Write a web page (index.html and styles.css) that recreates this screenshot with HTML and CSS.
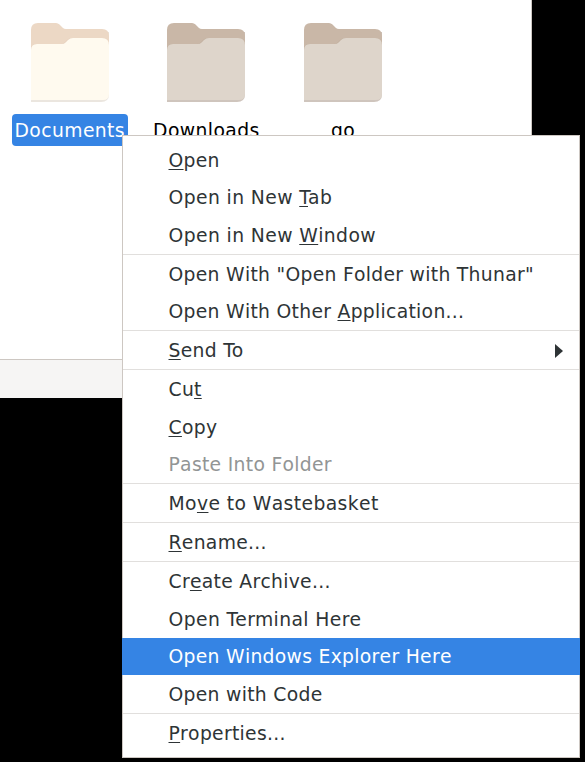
FILE: index.html
```html
<!DOCTYPE html>
<html lang="en">
<head>
<meta charset="utf-8">
<title>File manager</title>
<link rel="stylesheet" href="styles.css">
</head>
<body>
<svg class="defs" aria-hidden="true">
  <symbol id="folder" viewBox="0 0 82 82">
    <path class="shade" d="M2 10h78v62q0 8-8 8H2z"/>
    <path class="back" d="M2 8q0-7 7-7h18q2 0 3.500 1.500L34 6q1 1 3 1h36q7 0 7 7v30H2z"/>
    <path class="fold" d="M2 27q0-5 6-5h24q2 0 3.500-1.500L38 18q2-2 5-2h31q6 0 6 6v8H2z"/>
    <path class="front" d="M2 28q0-6 6-6h25q2 0 3.500-1.500L39 18q2-2 5-2h29q7 0 7 7v49q0 6-6 6H2z"/>
  </symbol>
</svg>
<main class="window">
  <section class="files">
    <div class="file selected"><svg class="icon pale"><use href="#folder"/></svg><span class="name">Documents</span></div>
    <div class="file"><svg class="icon"><use href="#folder"/></svg><span class="name">Downloads</span></div>
    <div class="file"><svg class="icon"><use href="#folder"/></svg><span class="name">go</span></div>
  </section>
  <footer class="status"></footer>
</main>
<nav class="menu">
  <div class="item"><span><u>O</u>pen</span></div>
  <div class="item wide kern"><span>Open in New <u>T</u>ab</span></div>
  <div class="item wide"><span>Open in New <u>W</u>indow</span></div>
  <div class="sep"></div>
  <div class="item"><span>Open With "Open Folder with Thunar"</span></div>
  <div class="item"><span>Open With Other <u>A</u>pplication...</span></div>
  <div class="sep"></div>
  <div class="item kern"><span><u>S</u>end To</span><svg class="arrow" viewBox="0 0 8 14"><path d="M0 0L8 7L0 14z"/></svg></div>
  <div class="sep"></div>
  <div class="item"><span>Cu<u>t</u></span></div>
  <div class="item"><span><u>C</u>opy</span></div>
  <div class="item disabled"><span>Paste Into Folder</span></div>
  <div class="sep"></div>
  <div class="item wide"><span>Mo<u>v</u>e to Wastebasket</span></div>
  <div class="sep"></div>
  <div class="item"><span><u>R</u>ename...</span></div>
  <div class="sep"></div>
  <div class="item"><span>Cr<u>e</u>ate Archive...</span></div>
  <div class="item wide kern"><span>Open Terminal Here</span></div>
  <div class="item active"><span>Open Windows Explorer Here</span></div>
  <div class="item"><span>Open with Code</span></div>
  <div class="sep"></div>
  <div class="item"><span><u>P</u>roperties...</span></div>
</nav>
</body>
</html>
```
FILE: styles.css
```css
* { box-sizing: border-box; }
body {
  margin: 0;
  height: 762px;
  overflow: hidden;
  background: #000;
  font-family: "DejaVu Sans", sans-serif;
  font-size: 18.750px;
  letter-spacing: 0.300px;
  font-kerning: none;
  color: #2e3436;
}
.defs { position: absolute; width: 0; height: 0; }
.window {
  width: 532px;
  height: 398px;
  display: flex;
  flex-direction: column;
  background: #fff;
  border-right: 1px solid #cdc7c2;
}
.files { flex: 1; display: flex; padding: 22px 0 0 1.500px; }
.file {
  width: 136.600px;
  display: flex;
  flex-direction: column;
  align-items: center;
  color: #000;
}
.icon {
  width: 82px;
  height: 82px;
  --back: #c9b7a7;
  --fold: #c1af9f;
  --front: #ded5cb;
  --shade: #cfc5bd;
}
.pale { --back: #ecd8c5; --fold: #e6d0be; --front: #fffaef; --shade: #ebe6df; }
.back { fill: var(--back); }
.fold { fill: var(--fold); }
.front { fill: var(--front); }
.shade { fill: var(--shade); }
.name {
  margin-top: 10px;
  height: 32px;
  padding: 1px 3px 0;
  line-height: 31px;
  border-radius: 4px;
  letter-spacing: 0.400px;
}
.selected .name { background: #3584e4; color: #fff; }
.status { height: 39px; background: #f6f5f4; border-top: 1px solid #cdc7c2; }
.menu {
  position: absolute;
  left: 122px;
  top: 135px;
  width: 458px;
  height: 622.500px;
  padding-top: 5.100px;
  background: #fff;
  border: 1px solid #cdc7c2;
}
.item {
  height: 37.550px;
  padding: 0.700px 16px 0 45.500px;
  margin: 0 -1px;
  border: 0 solid transparent;
  border-width: 0 1px;
  display: flex;
  align-items: center;
  justify-content: space-between;
  white-space: nowrap;
}
.item u {
  text-decoration-thickness: 1.300px;
  text-underline-offset: 2px;
  text-decoration-skip-ink: none;
}
.wide { letter-spacing: 0.400px; }
.kern { font-kerning: normal; }
.sep { height: 1px; margin-bottom: 0.400px; background: #e1dfdd; }
.disabled { color: #929595; }
.active { background: #3584e4; color: #fff; border-color: #3584e4; }
.arrow { width: 8px; height: 14px; fill: #2e3436; }
```
